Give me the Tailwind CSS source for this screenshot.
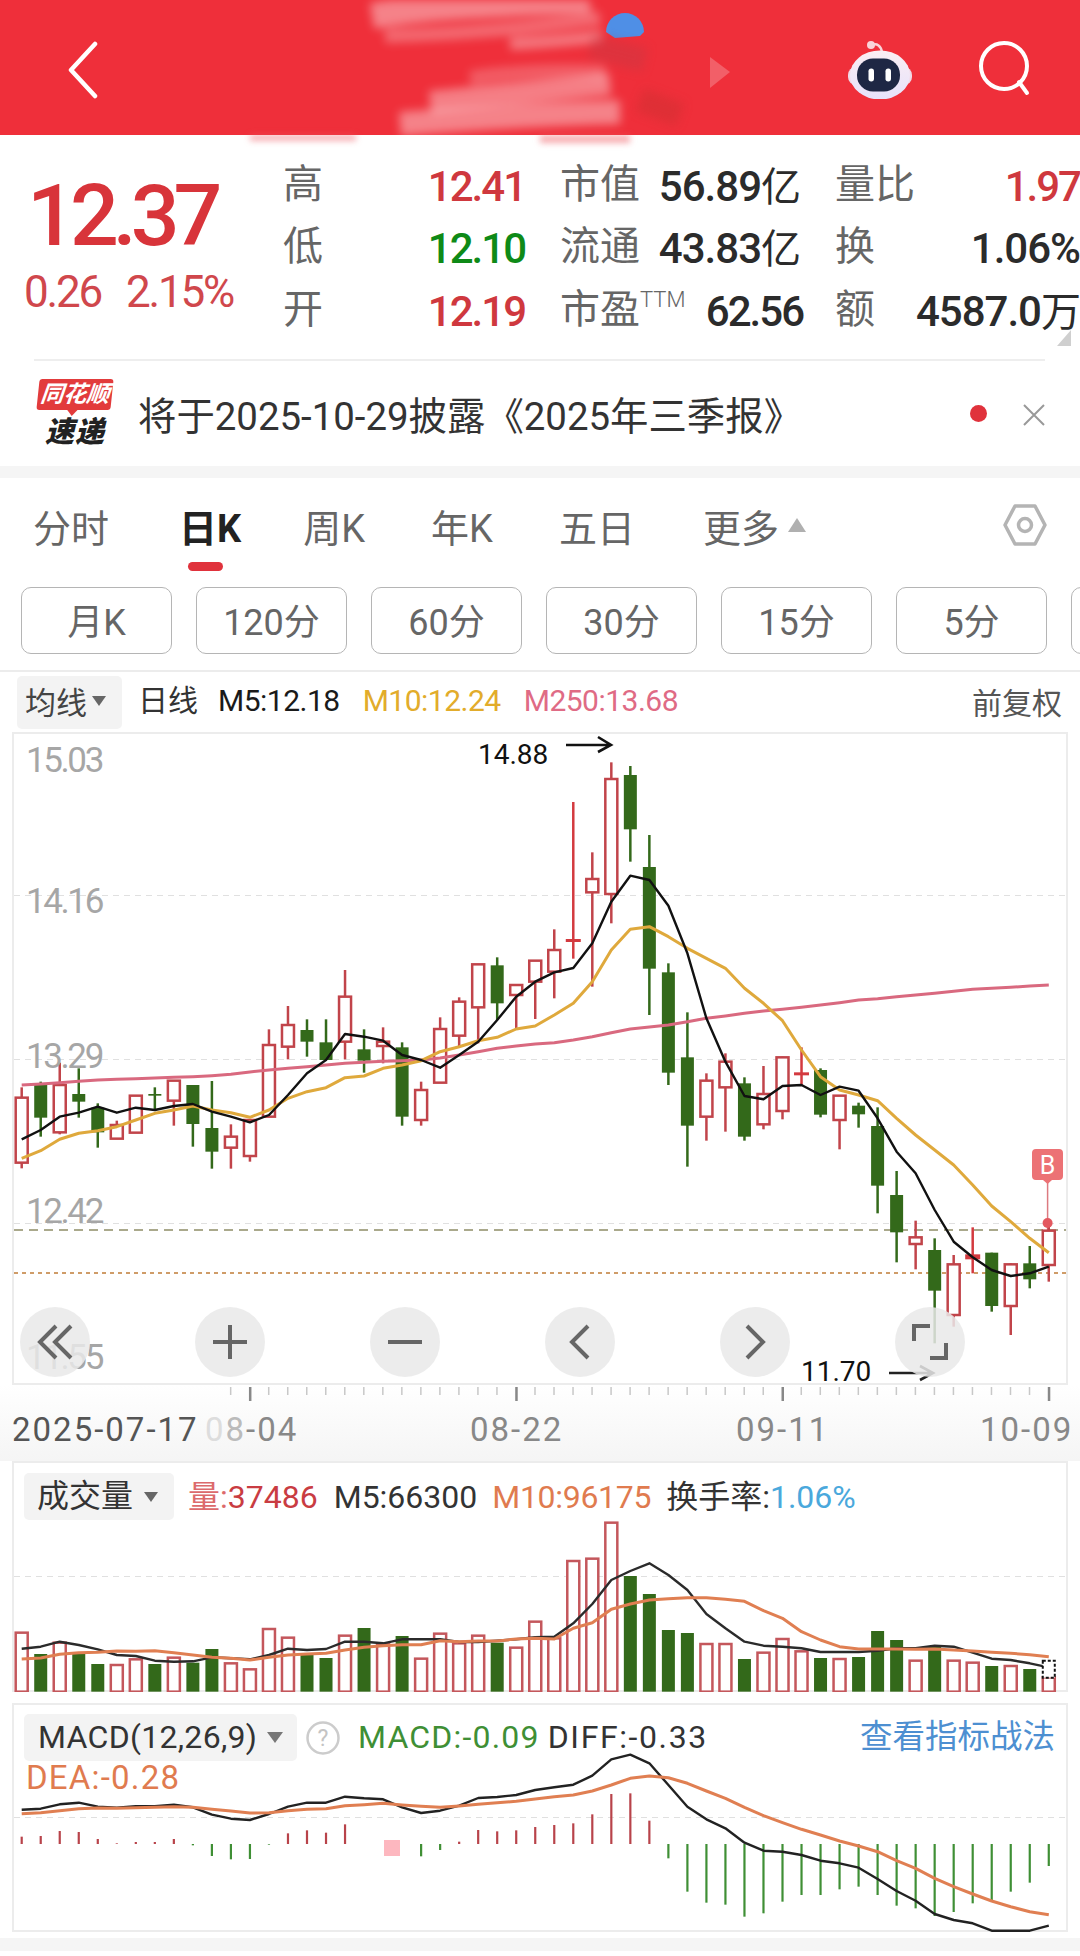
<!DOCTYPE html>
<html lang="zh-CN">
<head>
  <meta charset="UTF-8" />
  <title>K线</title>
  <script src="https://cdn.jsdelivr.net/npm/@tailwindcss/browser@4"></script>
</head>
<body class="bg-white font-[Roboto,'Noto_Sans_CJK_SC',sans-serif]">
<main class="relative w-[1080px] h-[1956px] overflow-hidden bg-white">

  <!-- Header -->
  <header class="relative h-[135px] bg-[#ef2f3a] flex items-center">
    <svg class="ml-[66px] mt-[5px]" width="34" height="58" viewBox="0 0 34 58" fill="none"><path d="M29 3 L5 29 L29 55" stroke="#fff" stroke-width="4.5" stroke-linecap="round" stroke-linejoin="round"/></svg>
    <div class="ml-auto mr-[47px] flex items-center gap-[65px]">
      <svg width="64" height="62" viewBox="0 0 64 62">
        <defs><linearGradient id="helmet" x1="0" y1="0" x2="0" y2="1"><stop offset="0" stop-color="#fbeef3"/><stop offset="1" stop-color="#e6e2fb"/></linearGradient></defs>
        <path d="M24 8 C29 6 33 9 34 15" fill="none" stroke="#f9d3d8" stroke-width="2.5"/>
        <circle cx="23" cy="8" r="4" fill="#f9d3d8"/>
        <rect x="0" y="30" width="64" height="18" rx="8" fill="#f1d9e6"/>
        <ellipse cx="32" cy="38" rx="30" ry="24.5" fill="url(#helmet)"/>
        <rect x="9" y="21.5" width="43" height="33" rx="16" fill="#1e2744"/>
        <rect x="20.5" y="31.5" width="5.5" height="13" rx="2.7" fill="#fff"/>
        <rect x="37.5" y="31.5" width="5.5" height="13" rx="2.7" fill="#fff"/>
      </svg>
      <svg width="56" height="56" viewBox="0 0 56 56" fill="none"><circle cx="27" cy="26" r="23" stroke="#fff" stroke-width="4"/><path d="M42 42 L50 53" stroke="#fff" stroke-width="4" stroke-linecap="round"/></svg>
    </div>
    <!-- smudged-out stock name -->
    <svg class="absolute left-0 top-0" width="1080" height="135" viewBox="0 0 1080 135" fill="none">
      <path d="M606 32 A19 19 0 0 1 644 32 L640 36 L615 38 Z" fill="#4f8fe6"/>
      <path d="M710 57 L730 72 L710 88 Z" fill="#f25f68"/>
    </svg>
    <svg class="absolute left-0 top-0 blur-[5px]" width="1080" height="155" viewBox="0 0 1080 155" fill="none">
      <path d="M372 16 C430 6 500 4 590 0" stroke="#fff" stroke-opacity=".4" stroke-width="26"/>
      <path d="M385 36 C450 34 520 30 600 18" stroke="#fff" stroke-opacity=".28" stroke-width="14"/>
      <path d="M510 44 C545 42 575 40 602 36" stroke="#fff" stroke-opacity=".35" stroke-width="12"/>
      <path d="M470 78 C510 72 560 70 605 72" stroke="#fff" stroke-opacity=".22" stroke-width="14"/>
      <path d="M430 102 C490 96 550 90 610 84" stroke="#fff" stroke-opacity=".38" stroke-width="22"/>
      <path d="M400 124 C470 118 550 114 620 112" stroke="#fff" stroke-opacity=".4" stroke-width="24"/>
      <path d="M640 100 L680 115" stroke="#c93030" stroke-opacity=".4" stroke-width="24"/>
      <path d="M590 46 L645 60" stroke="#c93842" stroke-opacity=".45" stroke-width="24"/>
    </svg>
  </header>
  <svg class="absolute left-0 top-[135px] blur-[3px]" width="1080" height="20" viewBox="0 0 1080 20" fill="none">
    <path d="M250 2 H356" stroke="#ef5a62" stroke-opacity=".55" stroke-width="7"/>
    <path d="M540 4 H630" stroke="#ef5a62" stroke-opacity=".5" stroke-width="8"/>
  </svg>

  <!-- Quote -->
  <section class="relative h-[226px] flex">
    <div class="w-[283px] pl-[27px] pt-[37px]">
      <div class="text-[86px] leading-[88px] font-medium tracking-[-6px] text-[#d8343a]">12.37</div>
      <div class="flex mt-[7px] -ml-[3px] gap-[25px] text-[44px] leading-[50px] tracking-[-2.2px] text-[#d0474c]"><span>0.26</span><span>2.15%</span></div>
    </div>
    <div class="pt-[20px] grid grid-cols-[242px_240px_245px] gap-x-[35px] auto-rows-[62.5px] items-center text-[40px] text-[#666]">
      <div class="flex justify-between"><span>高</span><span class="text-[42px] font-medium tracking-[-2px] text-[#cf383e]">12.41</span></div>
      <div class="flex justify-between"><span>市值</span><span class="text-[42px] font-medium tracking-[-1px] text-[#2b2b2b]">56.89<span class="text-[40px] font-normal">亿</span></span></div>
      <div class="flex justify-between"><span>量比</span><span class="text-[42px] font-medium tracking-[-2px] text-[#cf383e]">1.97</span></div>
      <div class="flex justify-between"><span>低</span><span class="text-[42px] font-medium tracking-[-2px] text-[#0e8a17]">12.10</span></div>
      <div class="flex justify-between"><span>流通</span><span class="text-[42px] font-medium tracking-[-1px] text-[#2b2b2b]">43.83<span class="text-[40px] font-normal">亿</span></span></div>
      <div class="flex justify-between"><span>换</span><span class="text-[42px] font-medium tracking-[-1px] text-[#2b2b2b]">1.06%</span></div>
      <div class="flex justify-between"><span>开</span><span class="text-[42px] font-medium tracking-[-2px] text-[#cf383e]">12.19</span></div>
      <div class="flex justify-between"><span>市盈<sup class="text-[22px] top-[-16px] font-light">TTM</sup></span><span class="text-[42px] font-medium tracking-[-2px] text-[#2b2b2b] mr-[-3px]">62.56</span></div>
      <div class="flex justify-between"><span>额</span><span class="text-[42px] font-medium tracking-[-1px] text-[#2b2b2b]">4587.0<span class="text-[40px] font-normal">万</span></span></div>
    </div>
    <svg class="absolute left-[1056px] top-[194px]" width="16" height="18" viewBox="0 0 16 18"><path d="M15 1 V17 H1 Z" fill="#cfcfcf"/></svg>
    <div class="absolute left-[34px] right-[35px] bottom-0 h-[2px] bg-[#eeeeee]"></div>
  </section>

  <!-- Notice -->
  <section class="relative h-[105px] flex items-center">
    <div class="ml-[36px] w-[78px] mt-[-2px] flex flex-col items-center">
      <div class="relative w-[74px] h-[31px] bg-[#e23b3c] rounded-[3px] -skew-x-6 flex items-center justify-center text-white text-[23px] leading-none font-bold italic">同花顺
        <span class="absolute left-[30px] bottom-[-6px] size-0 border-x-[6px] border-t-[7px] border-x-transparent border-t-[#e23b3c]"></span>
      </div>
      <div class="mt-[9px] text-[29px] leading-[27px] tracking-[1px] font-black italic text-[#222]">速递</div>
    </div>
    <div class="ml-[24px] mt-[6px] text-[38.4px] text-[#333]">将于2025-10-29披露《2025年三季报》</div>
    <span class="absolute left-[970px] top-[44px] size-[17px] rounded-full bg-[#e0323c]"></span>
    <svg class="absolute left-[1022px] top-[42px]" width="24" height="24" viewBox="0 0 24 24"><path d="M2 2 L22 22 M22 2 L2 22" stroke="#999" stroke-width="2"/></svg>
  </section>
  <div class="h-[12px] bg-[#f5f5f5]"></div>

  <!-- Period tabs -->
  <nav class="relative h-[109px] flex items-start pt-[29px] pl-[33px] text-[38px] leading-[44px] text-[#666]">
    <span>分时</span>
    <span class="ml-[70px] font-bold text-[#222]">日K</span>
    <span class="ml-[62px]">周K</span>
    <span class="ml-[66px]">年K</span>
    <span class="ml-[66px]">五日</span>
    <span class="ml-[68px]">更多</span>
    <svg class="ml-[8px] mt-[10px]" width="20" height="16" viewBox="0 0 20 16"><path d="M10 1 L19 15 H1 Z" fill="#b0b0b0"/></svg>
    <svg class="absolute left-[1002px] top-[25px]" width="46" height="44" viewBox="0 0 46 44" fill="none"><path d="M3 22 L13 3 H33 L43 22 L33 41 H13 Z" stroke="#b4b4b4" stroke-width="3.5" stroke-linejoin="round"/><circle cx="23" cy="22" r="6.5" stroke="#b4b4b4" stroke-width="3.5"/></svg>
    <span class="absolute left-[188px] top-[84px] w-[35px] h-[9px] rounded-full bg-[#e0323c]"></span>
  </nav>

  <!-- Sub periods -->
  <div class="flex gap-[24px] pl-[21px] h-[67px] text-[36px] text-[#666]">
    <div class="w-[151px] shrink-0 pt-[4px] border border-[#b5b5b5] rounded-[10px] flex items-center justify-center">月K</div>
    <div class="w-[151px] shrink-0 pt-[4px] border border-[#b5b5b5] rounded-[10px] flex items-center justify-center">120分</div>
    <div class="w-[151px] shrink-0 pt-[4px] border border-[#b5b5b5] rounded-[10px] flex items-center justify-center">60分</div>
    <div class="w-[151px] shrink-0 pt-[4px] border border-[#b5b5b5] rounded-[10px] flex items-center justify-center">30分</div>
    <div class="w-[151px] shrink-0 pt-[4px] border border-[#b5b5b5] rounded-[10px] flex items-center justify-center">15分</div>
    <div class="w-[151px] shrink-0 pt-[4px] border border-[#b5b5b5] rounded-[10px] flex items-center justify-center">5分</div>
    <div class="w-[151px] shrink-0 border border-[#b5b5b5] rounded-[10px]"></div>
  </div>
  <div class="h-[18px] border-b-2 border-[#ececec]"></div>

  <!-- MA legend -->
  <div class="relative h-[60px] flex items-center pl-[17px] text-[30px] tracking-[-.5px]">
    <div class="h-[53px] w-[105px] bg-[#f3f3f3] rounded-[5px] flex items-center pl-[8px] text-[#444] text-[31px] pt-[4px] tracking-normal">均线
      <svg class="ml-[4px] mb-[6px]" width="16" height="12" viewBox="0 0 16 12"><path d="M1 1 H15 L8 11 Z" fill="#666"/></svg>
    </div>
    <span class="ml-[16px] text-[#333] mt-[-3px] tracking-normal">日线</span>
    <span class="ml-[20px] text-[#1a1a1a] mt-[-3px]">M5:12.18</span>
    <span class="ml-[23px] text-[#e2ac2b] mt-[-3px]">M10:12.24</span>
    <span class="ml-[23px] text-[#df6b85] mt-[-3px]">M250:13.68</span>
    <span class="ml-auto mr-[18px] text-[#555] tracking-normal pt-[2px]">前复权</span>
  </div>

  <!-- Candle chart -->
  <section class="relative h-[653px] px-[12px]">
    <div class="h-full border-2 border-[#ececec]"></div>
    <svg id="kline" class="absolute left-0 top-0" width="1080" height="653" viewBox="0 732 1080 653" fill="none"></svg>
    <span class="absolute left-[26px] top-[10px] text-[35px] leading-[38px] tracking-[-2.4px] text-[#a6a6a6]">15.03</span>
    <span class="absolute left-[26px] top-[151px] text-[35px] leading-[38px] tracking-[-2.4px] text-[#a6a6a6]">14.16</span>
    <span class="absolute left-[26px] top-[306px] text-[35px] leading-[38px] tracking-[-2.4px] text-[#a6a6a6]">13.29</span>
    <span class="absolute left-[26px] top-[461px] text-[35px] leading-[38px] tracking-[-2.4px] text-[#a6a6a6]">12.42</span>
    <span class="absolute left-[26px] top-[607px] text-[35px] leading-[38px] tracking-[-2.4px] text-[#a6a6a6]">11.55</span>
    <span class="absolute left-[478px] top-[7px] text-[28px] leading-[32px] text-[#111]">14.88</span>
    <span class="absolute left-[801px] top-[624px] text-[28px] leading-[32px] text-[#111]">11.70</span>
    <!-- round chart controls -->
    <div class="absolute left-[20px] top-[575px] flex gap-[105px] text-[#666]">
      <button class="size-[70px] rounded-full bg-[#e9e9e9]/85 flex items-center justify-center"><svg width="38" height="36" viewBox="0 0 38 36" fill="none" stroke="#666" stroke-width="4"><path d="M20 2 L4 18 L20 34"/><path d="M35 2 L19 18 L35 34"/></svg></button>
      <button class="size-[70px] rounded-full bg-[#e9e9e9]/85 flex items-center justify-center"><svg width="34" height="34" viewBox="0 0 34 34" fill="none" stroke="#666" stroke-width="4"><path d="M0 17 H34 M17 0 V34"/></svg></button>
      <button class="size-[70px] rounded-full bg-[#e9e9e9]/85 flex items-center justify-center"><svg width="34" height="34" viewBox="0 0 34 34" fill="none" stroke="#666" stroke-width="4"><path d="M0 17 H34"/></svg></button>
      <button class="size-[70px] rounded-full bg-[#e9e9e9]/85 flex items-center justify-center"><svg width="22" height="36" viewBox="0 0 22 36" fill="none" stroke="#666" stroke-width="4"><path d="M19 2 L3 18 L19 34"/></svg></button>
      <button class="size-[70px] rounded-full bg-[#e9e9e9]/85 flex items-center justify-center"><svg width="22" height="36" viewBox="0 0 22 36" fill="none" stroke="#666" stroke-width="4"><path d="M3 2 L19 18 L3 34"/></svg></button>
      <button class="size-[70px] rounded-full bg-[#e9e9e9]/85 flex items-center justify-center"><svg width="36" height="36" viewBox="0 0 36 36" fill="none" stroke="#666" stroke-width="4"><path d="M2 17 V2 H18"/><path d="M34 19 V34 H18"/></svg></button>
    </div>
  </section>

  <!-- Time axis -->
  <div class="relative h-[76px] bg-linear-to-b from-white to-[#f5f5f5] text-[33px] leading-[38px] tracking-[2px] text-[#888]">
    <svg id="ticks" class="absolute left-0 top-0" width="1080" height="20" viewBox="0 1385 1080 20"></svg>
    <span class="absolute left-[12px] top-[26px] text-[#555]">2025-07-17</span>
    <span class="absolute left-[205px] top-[26px]"><span class="text-[#dddddd]">0</span><span class="text-[#bbbbbb]">8</span>-04</span>
    <span class="absolute left-[470px] top-[26px]">08-22</span>
    <span class="absolute left-[736px] top-[26px]">09-11</span>
    <span class="absolute left-[980px] top-[26px]">10-09</span>
  </div>

  <!-- Volume -->
  <section class="relative h-[231px] px-[12px]">
    <div class="h-full border-2 border-[#ececec] pl-[10px] pt-[10px] flex items-start text-[32px] leading-[49px]">
      <div class="h-[47px] w-[150px] bg-[#f3f3f3] rounded-[5px] flex items-center pl-[13px] text-[#333]">成交量
        <svg class="ml-[10px]" width="16" height="12" viewBox="0 0 16 12"><path d="M1 1 H15 L8 11 Z" fill="#666"/></svg>
      </div>
      <span class="ml-[14px] text-[#c93c42]"><span class="text-[#dc6a6c]">量:</span>37486</span>
      <span class="ml-[16px] text-[#333]">M5:66300</span>
      <span class="ml-[15px] tracking-[-.3px] text-[#e07b4f]">M10:96175</span>
      <span class="ml-[15px] text-[#333]">换手率:<span class="text-[#4aa8dc]">1.06%</span></span>
    </div>
    <svg id="vol" class="absolute left-0 top-0" width="1080" height="231" viewBox="0 1461 1080 231" fill="none"></svg>
  </section>
  <div class="h-[11px]"></div>

  <!-- MACD -->
  <section class="relative h-[229px] px-[12px]">
    <div class="h-full border-2 border-[#ececec]"></div>
    <svg id="macd" class="absolute left-0 top-0" width="1080" height="229" viewBox="0 1703 1080 229" fill="none"></svg>
    <div class="absolute left-[24px] top-[11px] flex items-center text-[32px] leading-[47px]">
      <div class="h-[47px] w-[273px] bg-[#f3f3f3] rounded-[5px] flex items-center pl-[14px] text-[#333] tracking-[.3px]">MACD(12,26,9)
        <svg class="ml-[9px]" width="18" height="13" viewBox="0 0 18 13"><path d="M1 1 H17 L9 12 Z" fill="#777"/></svg>
      </div>
      <svg class="ml-[9px]" width="34" height="34" viewBox="0 0 34 34" fill="none"><circle cx="17" cy="17" r="15.5" stroke="#cccccc" stroke-width="2.5"/><text x="17" y="25" text-anchor="middle" font-size="23" font-family="Roboto" fill="#c4c4c4">?</text></svg>
      <span class="ml-[18px] tracking-[1.2px] text-[#3f8f35]">MACD:-0.09</span>
      <span class="ml-[8px] tracking-[1.6px] text-[#333]">DIFF:-0.33</span>
    </div>
    <div class="absolute left-[26px] top-[57px] text-[33px] leading-[36px] tracking-[1.2px] text-[#e07b4f]">DEA:-0.28</div>
    <div class="absolute right-[25px] top-[11px] text-[32.5px] leading-[47px] text-[#4d8fd1]">查看指标战法</div>
  </section>
  <div class="h-[6px]"></div>
  <div class="h-[13px] bg-[#f5f5f5]"></div>
</main>

<script>
  // candle: [color, wickTop, bodyTop, bodyBottom, wickBottom] in crop units, y = 730 + v / 3
  const candles = [
    ['r',1072,1103,1298,1315],['g',1055,1065,1163,1220],['r',998,1065,1207,1213],['g',1015,1092,1115,1163],['g',1120,1133,1207,1253],
    ['r',1172,1185,1226,1226],['r',1097,1097,1208,1208],['g',1072,1092,1097,1140],['r',1052,1052,1112,1187],['g',1065,1065,1182,1250],
    ['g',1053,1194,1265,1316],['r',1183,1220,1253,1316],['r',1170,1170,1278,1295],['r',898,945,1160,1160],['r',828,885,950,988],
    ['g',868,900,935,980],['g',868,937,990,990],['r',720,800,935,988],['g',898,958,992,1028],['r',892,935,948,1000],
    ['g',937,952,1160,1187],['r',1055,1080,1170,1187],['r',862,897,1058,1058],['r',802,815,917,950],['r',703,703,832,940],
    ['g',682,706,820,870],['r',765,765,795,895],['r',690,692,755,867],['r',598,660,725,805],['d',216,627,636,686],
    ['r',367,447,487,770],['r',97,147,492,580],['g',108,135,298,395],['g',315,411,716,855],['g',700,727,1028,1065],
    ['g',847,982,1187,1310],['r',1030,1052,1160,1232],['r',970,995,1072,1205],['g',1042,1060,1220,1232],['r',1008,1092,1183,1198],
    ['r',980,982,1143,1168],['d',952,1027,1036,1065],['g',1015,1020,1154,1162],['r',1097,1097,1170,1258],['g',1118,1127,1153,1193],
    ['g',1132,1188,1367,1450],['g',1323,1395,1507,1597],['r',1472,1522,1542,1618],['g',1525,1560,1682,1840],['r',1575,1603,1755,1790],
    ['d',1492,1573,1588,1630],['g',1568,1568,1728,1745],['r',1600,1603,1728,1815],['g',1548,1600,1648,1675],['r',1470,1502,1605,1655]
  ];
  const ma5 = [1228,1200,1160,1148,1130,1148,1133,1140,1128,1122,1145,1160,1177,1155,1095,1030,990,912,920,932,975,990,1013,975,935,870,800,755,727,714,640,515,437,450,527,670,865,995,1098,1108,1068,1065,1095,1070,1082,1165,1265,1330,1440,1535,1582,1620,1638,1630,1610];
  const ma10 = [1285,1262,1228,1210,1202,1190,1170,1150,1140,1128,1140,1148,1162,1140,1105,1085,1073,1043,1038,1015,1005,992,965,950,932,922,897,888,855,820,755,660,598,590,620,655,685,715,775,820,872,960,1040,1080,1095,1112,1165,1215,1260,1305,1365,1428,1475,1525,1568];
  const ma250 = [1065,1062,1058,1054,1050,1048,1046,1044,1042,1040,1037,1033,1026,1020,1015,1010,1005,1000,997,994,992,990,984,975,965,955,948,942,938,930,920,908,897,891,885,875,865,858,850,843,838,832,825,818,810,806,800,795,790,784,778,775,772,768,765];
  const volTop = [578,642,608,640,672,675,658,672,653,668,627,670,688,567,593,645,654,587,564,612,588,656,581,610,587,608,623,545,595,363,356,248,408,462,570,579,612,612,657,638,597,634,654,657,651,573,600,662,620,662,668,678,678,687,712];
  const volBlack = [626,620,605,615,628,645,648,662,665,664,652,655,658,645,626,630,627,605,605,610,598,598,598,606,606,602,598,592,590,550,492,420,393,370,405,450,522,565,605,617,620,625,636,636,636,632,625,625,617,620,638,656,660,670,682];
  const volOrange = [657,654,643,638,637,633,634,632,638,645,652,655,660,652,645,642,640,630,622,617,614,614,602,605,603,603,597,595,597,565,548,508,492,480,476,473,473,478,484,512,535,575,600,620,627,627,627,628,627,630,633,637,640,644,650];
  const macdBlack = [359,356,343,338,350,353,349,349,344,352,374,386,390,372,350,338,338,320,325,328,352,369,362,347,324,321,315,300,292,284,257,208,194,220,285,350,388,415,458,482,485,495,512,520,533,567,603,632,672,690,700,722,722,722,707];
  const macdOrange = [371,368,362,356,354,355,353,352,350,352,358,363,369,368,362,358,356,347,344,340,345,349,352,348,343,338,334,327,320,315,303,285,265,258,263,280,303,325,352,377,398,418,435,453,468,485,512,535,565,590,612,633,650,665,674];
  const macdHist = [440,438,423,426,447,460,456,456,447,466,498,508,507,464,430,421,428,403,null,null,null,499,480,455,420,424,421,411,405,400,373,312,310,392,505,605,638,644,680,670,635,615,615,598,590,615,647,655,678,666,640,635,605,578,528];

  const RED = '#c1444a', GREEN = '#33691a', SOLID = '#d33a3f';
  const X = i => 21.7 + 19.02 * i;
  const line = (vals, y, color, w) => `<polyline points="${vals.map((v, i) => X(i).toFixed(1) + ',' + y(v).toFixed(1)).join(' ')}" stroke="${color}" stroke-width="${w}" stroke-linejoin="round"/>`;

  // main chart
  const ky = v => 730 + v / 3;
  let s = '';
  [895, 1059, 1223].forEach(y => { s += `<path d="M14 ${y}.5 H1066" stroke="#e0e0e0" stroke-dasharray="6 5"/>`; });
  s += '<path d="M14 1230 H1066" stroke="#aaa98c" stroke-width="2" stroke-dasharray="9 6"/>';
  s += '<path d="M14 1273 H1066" stroke="#cf9c68" stroke-width="2" stroke-dasharray="4 4"/>';
  s += '<path d="M1047.6 1180 V1230" stroke="#dc7a80" stroke-width="1.5"/>';
  candles.forEach((c, i) => {
    const x = X(i), col = c[0] === 'g' ? GREEN : c[0] === 'd' ? SOLID : RED;
    s += `<path d="M${x} ${ky(c[1])} V${ky(c[4])}" stroke="${col}" stroke-width="2.5"/>`;
    if (c[0] === 'r') s += `<rect x="${x - 6}" y="${ky(c[2])}" width="12" height="${(c[3] - c[2]) / 3}" fill="#fff" stroke="${col}" stroke-width="2.5"/>`;
    else if (c[0] === 'd') s += `<rect x="${x - 7.5}" y="${ky(c[2])}" width="15" height="${(c[3] - c[2]) / 3}" fill="${col}"/>`;
    else s += `<rect x="${x - 6.5}" y="${ky(c[2])}" width="13" height="${(c[3] - c[2]) / 3}" fill="${col}"/>`;
  });
  s += line(ma250, ky, '#d9697f', 3) + line(ma10, ky, '#dfa93c', 3) + line(ma5, ky, '#111', 2.4);
  s += '<circle cx="1047.6" cy="1223" r="5" fill="#e3585f"/>';
  s += '<path d="M1036 1149 H1059 Q1063 1149 1063 1153 V1176 Q1063 1180 1059 1180 H1052 L1047.6 1184 L1043 1180 H1036 Q1032 1180 1032 1176 V1153 Q1032 1149 1036 1149 Z" fill="#ec7275"/>';
  s += '<text x="1047.6" y="1174" text-anchor="middle" font-size="25" font-family="Roboto" fill="#fff">B</text>';
  s += '<path d="M566 745 H611 M598 737 L611 745 L598 752" stroke="#111" stroke-width="2.6"/>';
  s += '<path d="M889 1373 H933 M920 1366 L933 1373 L920 1380" stroke="#222" stroke-width="2.6"/>';
  document.getElementById('kline').innerHTML = s;

  // time axis ticks
  let t = '';
  for (let i = 11; i < 55; i++) {
    const major = (i - 12) % 14 === 0;
    t += `<rect x="${X(i) - 1}" y="1387" width="${major ? 2.5 : 1.5}" height="${major ? 14 : 8}" fill="${major ? '#888' : '#c8c8c8'}"/>`;
  }
  document.getElementById('ticks').innerHTML = t;

  // volume bars
  const vy = v => 1440 + v / 3;
  let v = '<path d="M14 1576.5 H1066" stroke="#e0e0e0" stroke-dasharray="6 5"/>';
  volTop.forEach((top, i) => {
    const x = X(i), bottom = vy(755), isUp = candles[i][0] !== 'g';
    if (isUp) v += `<rect x="${x - 6}" y="${vy(top)}" width="12" height="${bottom - vy(top)}" fill="#fff" stroke="#c4575c" stroke-width="2.5"/>`;
    else v += `<rect x="${x - 6.5}" y="${vy(top)}" width="13" height="${bottom - vy(top)}" fill="${GREEN}"/>`;
  });
  v += line(volBlack, vy, '#2b2b2b', 2.4) + line(volOrange, vy, '#e07f52', 3);
  v += `<rect x="${X(54) - 6}" y="${vy(662)}" width="12" height="17" fill="#fff" stroke="#111" stroke-width="2" stroke-dasharray="3 2"/>`;
  document.getElementById('vol').innerHTML = v;

  // MACD
  const my = v => 1690 + v / 3;
  let m = '<path d="M14 1817.5 H1066" stroke="#e0e0e0" stroke-dasharray="6 5"/>';
  macdHist.forEach((top, i) => {
    if (top === null) return;
    const col = top > 462 ? '#3f8f35' : '#b8434a';
    m += `<path d="M${X(i)} ${my(462)} V${my(top)}" stroke="${col}" stroke-width="2.2"/>`;
  });
  m += '<rect x="384" y="1840" width="16" height="16" fill="#fdb7bf"/>';
  m += line(macdBlack, my, '#222', 2.4) + line(macdOrange, my, '#e07f52', 3);
  document.getElementById('macd').innerHTML = m;
</script>
</body>
</html>
